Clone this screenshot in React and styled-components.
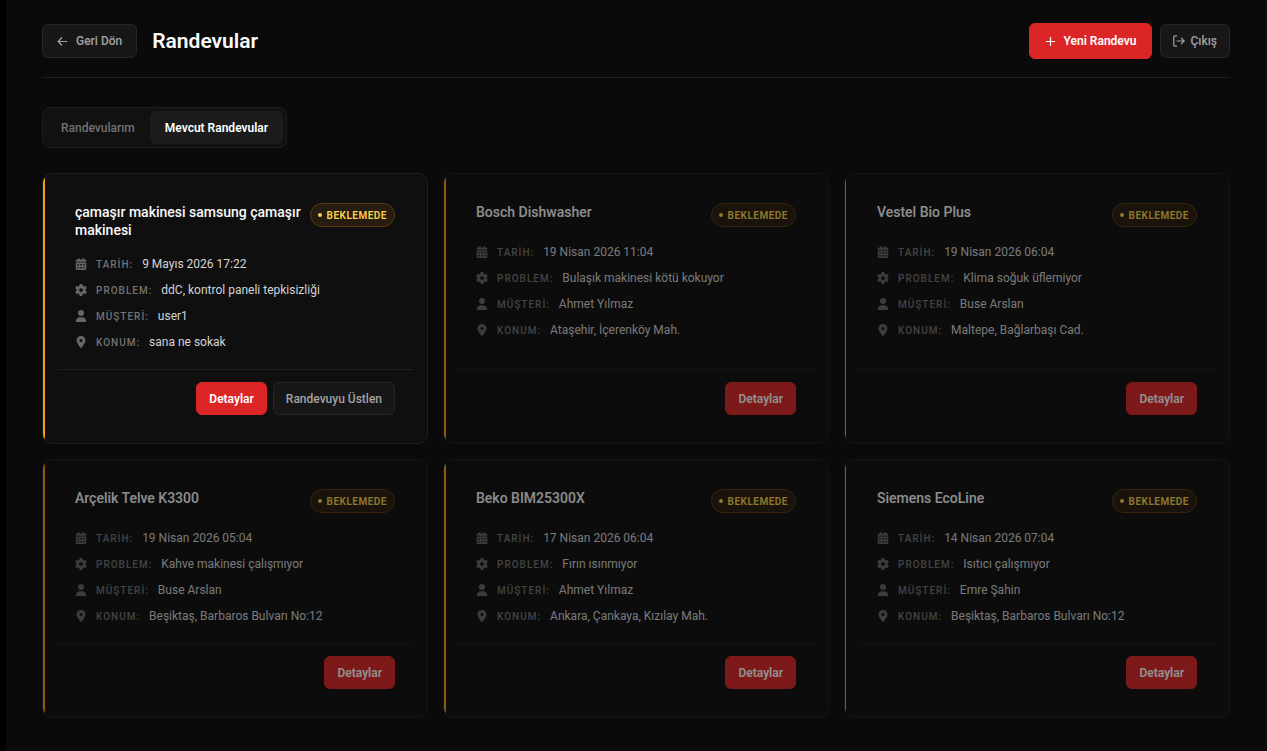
import React, { useState } from 'react';
import styled, { createGlobalStyle } from 'styled-components';
import { FaCalendarDays, FaGear, FaUser, FaLocationDot } from 'react-icons/fa6';

const GlobalStyle = createGlobalStyle`
  * {
    box-sizing: border-box;
  }
  body {
    margin: 0;
    background: #0a0a0a;
    color: #fafafa;
    font-family: Roboto, 'Noto Sans', sans-serif;
    font-size: 12px;
  }
  button {
    font-family: inherit;
    cursor: pointer;
  }
`;

const Page = styled.div`
  min-height: 100vh;
  border-left: 6px solid #000;
  padding: 23px 37px 32px 36px;
`;

const Header = styled.header`
  display: flex;
  align-items: center;
  justify-content: space-between;
  padding-bottom: 18px;
  border-bottom: 1px solid #1f1f1f;
`;

const HeaderGroup = styled.div`
  display: flex;
  align-items: center;
  gap: ${(props) => props.$gap};
`;

const Title = styled.h1`
  margin: 0;
  font-size: 21px;
  line-height: 28px;
  font-weight: 600;
`;

const Button = styled.button`
  display: inline-flex;
  align-items: center;
  justify-content: center;
  gap: ${(props) => props.$gap || '8px'};
  height: ${(props) => props.$height || '33px'};
  padding: 0 ${(props) => props.$pad || '12px'};
  border: 1px solid ${(props) => (props.$primary ? '#dc2626' : '#262626')};
  border-radius: 6px;
  background: ${(props) => (props.$primary ? '#dc2626' : '#171717')};
  color: ${(props) => (props.$primary ? '#fff' : '#a3a3a3')};
  font-size: 12px;
  line-height: 16px;
  font-weight: ${(props) => (props.$primary ? 600 : 500)};
  white-space: nowrap;
`;

const Tabs = styled.div`
  display: inline-flex;
  margin: 29px 0 25px;
  padding: 3px;
  border: 1px solid #1f1f1f;
  border-radius: 8px;
  background: #111;
`;

const Tab = styled.button`
  height: 33px;
  padding: 0 15px;
  border: 0;
  border-radius: 6px;
  background: ${(props) => (props.$active ? '#1c1c1c' : 'transparent')};
  color: ${(props) => (props.$active ? '#fff' : '#737373')};
  font-size: 12px;
  font-weight: ${(props) => (props.$active ? 600 : 500)};
`;

const Grid = styled.main`
  display: grid;
  grid-template-columns: repeat(3, minmax(0, 1fr));
  gap: 15px;
`;

const Card = styled.article`
  position: relative;
  display: flex;
  flex-direction: column;
  padding: 29px 14px 28px 14px;
  border: 1px solid #1f1f1f;
  border-radius: 10px;
  background: #0f0f0f;
  overflow: hidden;
  opacity: ${(props) => (props.$muted ? 0.55 : 1)};

  &::before {
    content: '';
    position: absolute;
    top: 0;
    bottom: 0;
    left: 0;
    width: 2px;
    background: #f59e0b;
  }
  &:nth-child(3n)::before {
    width: 1px;
  }
`;

const CardHead = styled.div`
  display: flex;
  align-items: flex-start;
  justify-content: space-between;
  gap: 8px;
  padding: 0 18px;
`;

const CardTitle = styled.h2`
  margin: 0;
  font-size: 14px;
  line-height: 18px;
  font-weight: 500;
`;

const Badge = styled.span`
  display: inline-flex;
  flex-shrink: 0;
  align-items: center;
  gap: 5px;
  height: 24px;
  padding: 0 7px;
  border: 1px solid #5a3c0c;
  border-radius: 12px;
  background: #261c0f;
  color: #fcd34d;
  font-size: 10px;
  font-weight: 600;
  letter-spacing: 0.5px;

  &::before {
    content: '';
    width: 4px;
    height: 4px;
    border-radius: 50%;
    background: currentColor;
  }
`;

const Details = styled.dl`
  display: flex;
  flex-direction: column;
  gap: 6px;
  margin: 0;
  padding: 15px 18px 17px;
`;

const Detail = styled.div`
  display: flex;
  align-items: center;
  height: 20px;

  svg {
    width: 12px;
    height: 12px;
    margin-right: 9px;
    color: #666;
  }
  dt {
    margin-right: 9px;
    color: #737373;
    font-size: 10px;
    font-weight: 500;
    letter-spacing: 1px;
  }
  dd {
    margin: 0;
    color: #d4d4d4;
    font-size: 12px;
  }
`;

const CardFoot = styled.div`
  display: flex;
  justify-content: flex-end;
  gap: 6px;
  margin-top: auto;
  padding: 12px 18px 0;
  border-top: 1px solid #1f1f1f;
`;

const appointments = [
  {
    title: 'çamaşır makinesi samsung çamaşır makinesi',
    date: '9 Mayıs 2026 17:22',
    problem: 'ddC, kontrol paneli tepkisizliği',
    customer: 'user1',
    location: 'sana ne sokak',
    open: true,
  },
  {
    title: 'Bosch Dishwasher',
    date: '19 Nisan 2026 11:04',
    problem: 'Bulaşık makinesi kötü kokuyor',
    customer: 'Ahmet Yılmaz',
    location: 'Ataşehir, İçerenköy Mah.',
  },
  {
    title: 'Vestel Bio Plus',
    date: '19 Nisan 2026 06:04',
    problem: 'Klima soğuk üflemiyor',
    customer: 'Buse Arslan',
    location: 'Maltepe, Bağlarbaşı Cad.',
  },
  {
    title: 'Arçelik Telve K3300',
    date: '19 Nisan 2026 05:04',
    problem: 'Kahve makinesi çalışmıyor',
    customer: 'Buse Arslan',
    location: 'Beşiktaş, Barbaros Bulvarı No:12',
  },
  {
    title: 'Beko BIM25300X',
    date: '17 Nisan 2026 06:04',
    problem: 'Fırın ısınmıyor',
    customer: 'Ahmet Yılmaz',
    location: 'Ankara, Çankaya, Kızılay Mah.',
  },
  {
    title: 'Siemens EcoLine',
    date: '14 Nisan 2026 07:04',
    problem: 'Isıtıcı çalışmıyor',
    customer: 'Emre Şahin',
    location: 'Beşiktaş, Barbaros Bulvarı No:12',
  },
];

const BackIcon = () => (
  <svg width="11" height="11" viewBox="0 0 11 11" fill="none" stroke="currentColor" strokeWidth="1.2">
    <path d="M10.2 5.5H1.2M5 1.5L1.2 5.5 5 9.5" />
  </svg>
);

const PlusIcon = () => (
  <svg width="11" height="11" viewBox="0 0 11 11" fill="none" stroke="currentColor" strokeWidth="1.2">
    <path d="M5.5 1v9M1 5.5h9" />
  </svg>
);

const ExitIcon = () => (
  <svg width="12" height="12" viewBox="0 0 12 12" fill="none" stroke="currentColor" strokeWidth="1.2">
    <path d="M4 .8H1.8A1 1 0 0 0 .8 1.8v8.4a1 1 0 0 0 1 1H4M3.6 6h7.6M8 2.8L11.2 6 8 9.2" />
  </svg>
);

function AppointmentCard({ item }) {
  return (
    <Card $muted={!item.open}>
      <CardHead>
        <CardTitle>{item.title}</CardTitle>
        <Badge>BEKLEMEDE</Badge>
      </CardHead>
      <Details>
        <Detail>
          <FaCalendarDays />
          <dt>TARİH:</dt>
          <dd>{item.date}</dd>
        </Detail>
        <Detail>
          <FaGear />
          <dt>PROBLEM:</dt>
          <dd>{item.problem}</dd>
        </Detail>
        <Detail>
          <FaUser />
          <dt>MÜŞTERİ:</dt>
          <dd>{item.customer}</dd>
        </Detail>
        <Detail>
          <FaLocationDot />
          <dt>KONUM:</dt>
          <dd>{item.location}</dd>
        </Detail>
      </Details>
      <CardFoot>
        <Button $primary>Detaylar</Button>
        {item.open && <Button>Randevuyu Üstlen</Button>}
      </CardFoot>
    </Card>
  );
}

function App() {
  const [tab, setTab] = useState('available');

  return (
    <Page>
      <GlobalStyle />
      <Header>
        <HeaderGroup $gap="15px">
          <Button $height="34px" $pad="14px">
            <BackIcon />
            Geri Dön
          </Button>
          <Title>Randevular</Title>
        </HeaderGroup>
        <HeaderGroup $gap="8px">
          <Button $primary $height="36px" $pad="15px">
            <PlusIcon />
            Yeni Randevu
          </Button>
          <Button $height="34px" $gap="5px">
            <ExitIcon />
            Çıkış
          </Button>
        </HeaderGroup>
      </Header>
      <Tabs>
        <Tab $active={tab === 'mine'} onClick={() => setTab('mine')}>
          Randevularım
        </Tab>
        <Tab $active={tab === 'available'} onClick={() => setTab('available')}>
          Mevcut Randevular
        </Tab>
      </Tabs>
      <Grid>
        {appointments.map((item) => (
          <AppointmentCard key={item.title} item={item} />
        ))}
      </Grid>
    </Page>
  );
}

export default App;
